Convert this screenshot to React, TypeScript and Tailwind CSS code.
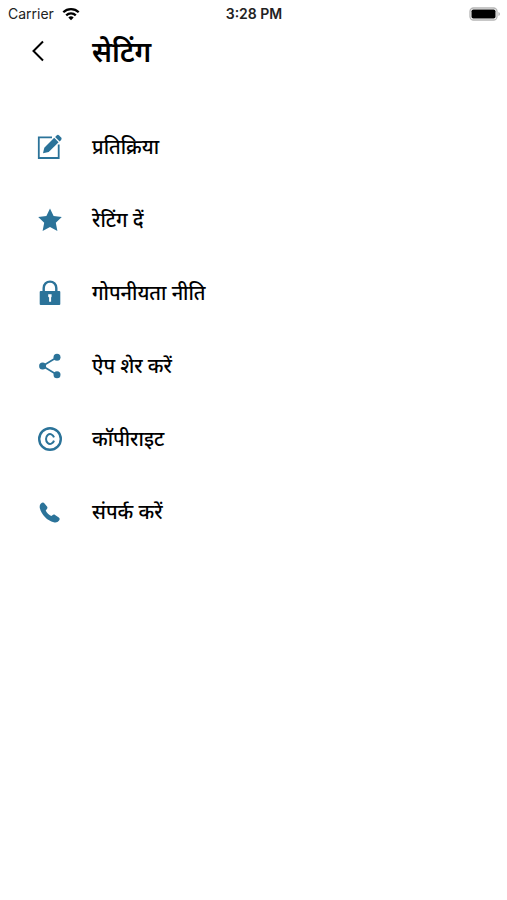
import type { ReactNode } from 'react';

interface SettingItem {
  id: string;
  label: string;
  icon: ReactNode;
}

interface IconProps {
  children: ReactNode;
}

function Icon({ children }: IconProps) {
  return (
    <svg viewBox="0 0 26 26" className="w-[26px] h-[26px] shrink-0" fill="none" aria-hidden="true">
      {children}
    </svg>
  );
}

const items: SettingItem[] = [
  {
    id: 'feedback',
    label: 'प्रतिक्रिया',
    icon: (
      <Icon>
        <path d="M15 3.4H1.8V24H21.7V10.5" stroke="currentColor" strokeWidth="1.8" />
        <path d="M6 19.3l1.3-5.6L17.2 3.8l4.4 4.4L11.7 18z" fill="currentColor" />
        <path d="M18.1 2.9l1.5-1.5a1.8 1.8 0 0 1 2.5 0l2 2a1.8 1.8 0 0 1 0 2.5l-1.5 1.5z" fill="currentColor" />
      </Icon>
    ),
  },
  {
    id: 'rating',
    label: 'रेटिंग दें',
    icon: (
      <Icon>
        <path d="M13 1.6l3.6 7.4 8.2 1.1-6 5.7 1.6 8.2-7.4-3.9L5.6 24l1.6-8.2-6-5.7L9.4 9z" fill="currentColor" />
      </Icon>
    ),
  },
  {
    id: 'privacy',
    label: 'गोपनीयता नीति',
    icon: (
      <Icon>
        <path d="M6.7 12V7.9a6.3 6.3 0 0 1 12.6 0V12" stroke="currentColor" strokeWidth="2.4" />
        <rect x="2.7" y="11" width="20.6" height="14" rx="1" fill="currentColor" />
        <path d="M11.2 14.3h3.4v2.4l-.5.8v4.3h-2v-4.3l-.9-.8z" fill="white" />
      </Icon>
    ),
  },
  {
    id: 'share',
    label: 'ऐप शेर करें',
    icon: (
      <Icon>
        <path d="M20 4.2L5.6 13 20 21.8" stroke="currentColor" strokeWidth="1.7" />
        <circle cx="20" cy="4.3" r="3.5" fill="currentColor" />
        <circle cx="5.6" cy="13" r="3.5" fill="currentColor" />
        <circle cx="20" cy="21.7" r="3.5" fill="currentColor" />
      </Icon>
    ),
  },
  {
    id: 'copyright',
    label: 'कॉपीराइट',
    icon: (
      <Icon>
        <circle cx="13" cy="13" r="10.8" stroke="currentColor" strokeWidth="2.4" />
        <path d="M17 11.4a4.1 4.9 0 1 0 0 3.2" stroke="currentColor" strokeWidth="2" />
      </Icon>
    ),
  },
  {
    id: 'contact',
    label: 'संपर्क करें',
    icon: (
      <Icon>
        <path
          d="M3.7 4.8C5 3.5 6.4 3.1 7.3 4.2l2.7 3.4c.7 1 .5 1.9-.3 2.7l-1 1.1c1.1 2.3 3.1 4.4 5.6 5.7l1.1-.9c.8-.7 1.8-.8 2.7-.2l3.7 2.5c1.1.8 1.1 1.900.3 3-1.200 1.700-3 2.300-5.300 1.800C10.400 22 4.300 15.700 2.800 9.100 2.500 7.400 2.700 5.900 3.700 4.800z"
          fill="currentColor"
        />
      </Icon>
    ),
  },
];

function StatusBar() {
  return (
    <div className="grid grid-cols-3 items-center h-7 pl-2 pr-[7px] font-['Inter',sans-serif] text-sm text-[#222]">
      <div className="flex items-center gap-2">
        <span>Carrier</span>
        <svg viewBox="0 0 18 14" className="w-[18px] h-[14px]" fill="none" stroke="black" strokeWidth="2.3" aria-hidden="true">
          <path d="M1.3 5.2a11 11 0 0 1 15.4 0" />
          <path d="M4.2 8.3a6.9 6.9 0 0 1 9.6 0" />
          <path d="M9 13.2L6.3 10.6a3.9 3.9 0 0 1 5.4 0z" fill="black" stroke="none" />
        </svg>
      </div>
      <span className="text-center font-semibold">3:28 PM</span>
      <svg viewBox="0 0 31 14" className="w-[31px] h-[14px] justify-self-end" aria-hidden="true">
        <rect x="1" y="1" width="27" height="12" rx="3.5" fill="white" stroke="#b5b5b5" strokeWidth="1.3" />
        <rect x="2.5" y="2.5" width="24" height="9" rx="1.8" fill="black" />
        <path d="M29.5 5v4q1.3-.5 1.3-2t-1.3-2z" fill="#a5a5a5" />
      </svg>
    </div>
  );
}

export default function App() {
  return (
    <div className="min-h-screen bg-white text-black font-['Noto_Sans',sans-serif]">
      <StatusBar />
      <header className="flex items-center h-12 pl-6 pb-0.5">
        <button type="button" aria-label="वापस" className="flex items-center justify-center w-7 h-10">
          <svg viewBox="0 0 14 22" className="w-[14px] h-[22px]" fill="none" stroke="black" strokeWidth="2" aria-hidden="true">
            <path d="M12 1.5L2.5 11 12 20.5" />
          </svg>
        </button>
        <h1 className="ml-10 text-[28px] leading-10 font-semibold">सेटिंग</h1>
      </header>
      <main className="pt-[34px]">
        <ul>
          {items.map((item) => (
            <li key={item.id}>
              <button type="button" className="flex items-center w-full h-[73px] pl-[37px] gap-[29px] text-left">
                <span className="text-[#2b7399]">{item.icon}</span>
                <span className="text-xl font-medium">{item.label}</span>
              </button>
            </li>
          ))}
        </ul>
      </main>
    </div>
  );
}
